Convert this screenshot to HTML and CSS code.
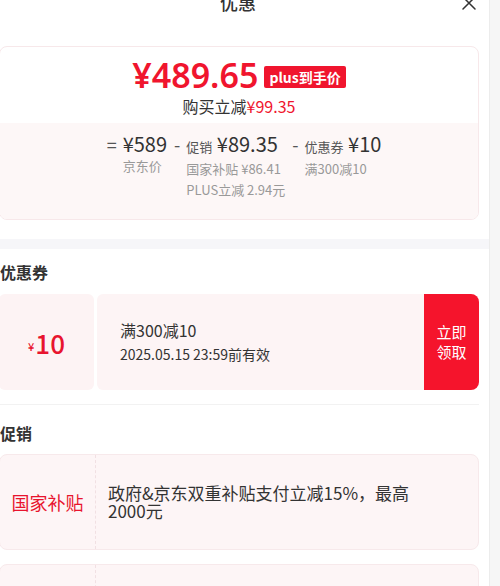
FILE: index.html
```html
<!DOCTYPE html>
<html lang="zh">
<head>
    <meta charset="UTF-8">
    <meta name="viewport" content="width=device-width, initial-scale=1.0">
    <title>优惠</title>
    <link rel="stylesheet" href="styles.css">
</head>
<body>
    <div class="panel">
        <!-- 标题栏 -->
        <div class="header">
            <span class="title">优惠</span>
            <span class="close">
                <svg width="16" height="16" viewBox="0 0 16 16"><path d="M2 2L14 14M14 2L2 14" stroke="#333" stroke-width="1.5" fill="none" stroke-linecap="round"/></svg>
            </span>
        </div>

        <div class="content">
            <!-- 到手价卡片 -->
            <div class="price-card">
                <div class="price-top">
                    <div class="price-line">
                        <span class="price">¥489.65</span>
                        <span class="badge">plus到手价</span>
                    </div>
                    <div class="save">购买立减<span class="red">¥99.35</span></div>
                </div>
                <div class="price-calc">
                    <div class="calc-item">
                        <span class="sign">=</span>
                        <div class="calc-block">
                            <div class="calc-value">¥589</div>
                            <div class="calc-note">京东价</div>
                        </div>
                    </div>
                    <div class="calc-item">
                        <span class="sign">-</span>
                        <div class="calc-block">
                            <div class="calc-value"><small>促销</small> ¥89.35</div>
                            <div class="calc-note">国家补贴 ¥86.41</div>
                            <div class="calc-note">PLUS立减 2.94元</div>
                        </div>
                    </div>
                    <div class="calc-item">
                        <span class="sign">-</span>
                        <div class="calc-block">
                            <div class="calc-value"><small>优惠券</small> ¥10</div>
                            <div class="calc-note">满300减10</div>
                        </div>
                    </div>
                </div>
            </div>
        </div>

        <div class="band"></div>

        <div class="content">
            <!-- 优惠券 -->
            <div class="section-title">优惠券</div>
            <div class="coupon">
                <div class="coupon-left"><small>¥</small>10</div>
                <div class="coupon-right">
                    <div class="coupon-info">
                        <div class="coupon-name">满300减10</div>
                        <div class="coupon-date">2025.05.15 23:59前有效</div>
                    </div>
                    <div class="coupon-btn">立即<br>领取</div>
                </div>
            </div>

            <div class="divider"></div>

            <!-- 促销 -->
            <div class="section-title">促销</div>
            <div class="promo">
                <div class="promo-tag">国家补贴</div>
                <div class="promo-text">政府&amp;京东双重补贴支付立减15%，最高2000元</div>
            </div>
            <div class="promo">
                <div class="promo-tag"></div>
                <div class="promo-text"></div>
            </div>
        </div>
    </div>
</body>
</html>
```

FILE: styles.css
```css
body {
    margin: 0;
    font-family: "Noto Sans CJK SC", "Noto Sans", sans-serif;
    background-color: #f6f6f6;
    color: #333;
    overflow: hidden;
}
.panel {
    width: 490px;
    margin-left: -1px;
    min-height: 100vh;
    background-color: #fff;
    border-right: 1px solid #ececec;
}
.header {
    height: 44px;
    margin-top: -20px;
    padding-right: 12px;
    display: flex;
    align-items: center;
    justify-content: center;
    position: relative;
}
.title {
    font-size: 18px;
    font-weight: 500;
}
.close {
    position: absolute;
    right: 12px;
    top: 15px;
    display: flex;
}
.content {
    padding: 22px 10px 0 0;
}
.price-card {
    border: 1px solid #f7e8ea;
    border-radius: 8px;
    overflow: hidden;
}
.price-top {
    padding: 8px 0 6px;
    text-align: center;
}
.price-line {
    height: 40px;
    display: flex;
    align-items: center;
    justify-content: center;
    gap: 6px;
}
.price {
    color: #f0152e;
    font-size: 34px;
    font-weight: 600;
    font-family: "Noto Sans", sans-serif;
}
.badge {
    background-color: #f0152e;
    color: #fff;
    font-size: 14px;
    font-weight: 700;
    padding: 0 5px;
    height: 22px;
    line-height: 22px;
    border-radius: 2px;
    margin-top: 4px;
}
.save {
    font-size: 16px;
    line-height: 22px;
}
.red {
    color: #f0152e;
}
.price-calc {
    background-color: #fdf7f7;
    padding: 10px 0 19px 10px;
    display: flex;
    justify-content: center;
    gap: 7px;
}
.calc-item {
    display: flex;
    align-items: flex-start;
    gap: 6px;
}
.sign {
    font-size: 18px;
    line-height: 22px;
    color: #555;
}
.calc-value {
    font-size: 20px;
    line-height: 22px;
    color: #333;
}
.calc-value small {
    font-size: 13px;
    color: #555;
}
.calc-note {
    font-size: 13px;
    line-height: 21px;
    color: #999;
}
.band {
    height: 10px;
    margin-top: 19px;
    background-color: #f6f6f9;
}
.content + .band + .content {
    padding-top: 11px;
}
.section-title {
    font-size: 16px;
    font-weight: 700;
    line-height: 24px;
    padding-left: 1px;
}
.coupon {
    margin-top: 10px;
    height: 96px;
    display: flex;
    gap: 3px;
}
.coupon-left {
    width: 95px;
    background-color: #fdf3f4;
    border-radius: 6px;
    display: flex;
    align-items: center;
    justify-content: center;
    color: #e8142e;
    font-size: 26px;
    font-weight: 500;
}
.coupon-left small {
    font-size: 11px;
    margin-top: 8px;
    margin-right: 1px;
}
.coupon-right {
    flex: 1;
    display: flex;
    background-color: #fdf4f5;
    border-radius: 6px 8px 8px 6px;
    overflow: hidden;
}
.coupon-info {
    flex: 1;
    padding-left: 23px;
    display: flex;
    flex-direction: column;
    justify-content: center;
}
.coupon-name {
    font-size: 16px;
    line-height: 24px;
}
.coupon-date {
    font-size: 14px;
    line-height: 24px;
}
.coupon-btn {
    width: 55px;
    background-color: #f5142c;
    color: #fff;
    font-size: 15px;
    line-height: 20px;
    display: flex;
    align-items: center;
    justify-content: center;
    text-align: center;
}
.divider {
    height: 1px;
    background-color: #f2f2f2;
    margin: 14px 0 16px;
}
.promo {
    margin-top: 9px;
    height: 96px;
    border: 1px solid #f7e9eb;
    border-radius: 8px;
    background-color: #fdf5f6;
    display: flex;
    box-sizing: border-box;
}
.promo + .promo {
    margin-top: 14px;
}
.promo-tag {
    width: 95px;
    border-right: 1px dashed #f1e0e3;
    display: flex;
    align-items: center;
    justify-content: center;
    color: #e8142e;
    font-size: 18px;
}
.promo-text {
    align-self: center;
    padding-left: 12px;
    width: 320px;
    font-size: 17px;
    line-height: 18px;
}
```
